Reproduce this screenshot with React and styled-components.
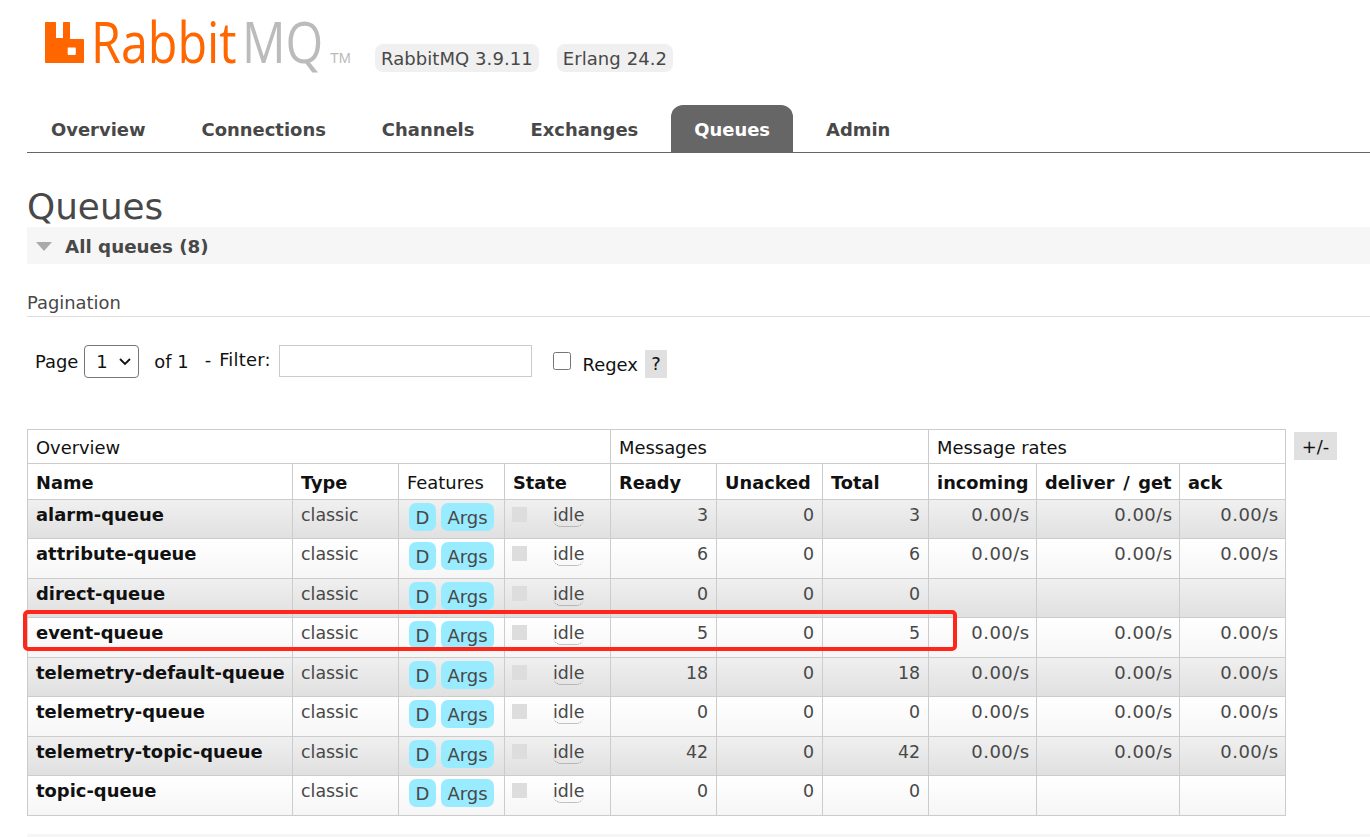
import React from 'react';
import styled, { createGlobalStyle } from 'styled-components';

const Global = createGlobalStyle`
  html, body { margin: 0; padding: 0; background: #fff; overflow: hidden; height: 837px; }
  body { font-family: "DejaVu Sans", Verdana, sans-serif; font-size: 18px; color: #484848; }
  * { box-sizing: border-box; }
`;
const chevron = `url("data:image/svg+xml,%3Csvg xmlns='http://www.w3.org/2000/svg' width='14' height='9' viewBox='0 0 14 9'%3E%3Cpath d='M2 2l5 5 5-5' fill='none' stroke='%23111' stroke-width='1.8'/%3E%3C/svg%3E")`;
const Page = styled.div`position: relative; width: 1370px; height: 837px; padding-left: 27px; overflow: hidden;`;
const Header = styled.header`display: flex; align-items: flex-start; height: 105px;`;
const Logo = styled.svg`display: block; width: 330px; height: 84px; flex: none;`;
const Versions = styled.div`display: flex; gap: 18px; margin-top: 44px; margin-left: 18px;`;
const Version = styled.span`background: #f0f0f0; border-radius: 8px; padding: 0 6px; height: 28px; line-height: 30px; font-size: 18px; letter-spacing: .07px; color: #484848;`;
const Nav = styled.nav`display: flex; gap: 10px; height: 48px; padding-left: 1px; border-bottom: 1px solid #666; margin-right: -1px;`;
const Tab = styled.a`
  display: block; height: 47px; padding: 0 23px; line-height: 50px; font-size: 17.95px; font-weight: 700;
  border-radius: 12px 12px 0 0; color: ${p => p.$active ? '#fff' : '#484848'}; background: ${p => p.$active ? '#666' : 'transparent'};
`;
const Title = styled.h1`margin: 32px 0 0 0; font-size: 35.8px; font-weight: 400; height: 42px; line-height: 44px; color: #484848;`;
const Section = styled.div`display: flex; align-items: center; height: 37px; background: #f6f6f6; gap: 12px; padding-left: 9px;`;
const Tri = styled.span`width: 0; height: 0; border-left: 8.5px solid transparent; border-right: 8.5px solid transparent; border-top: 9px solid #aaa; margin-top: 1px;`;
const SectionTitle = styled.h2`margin: 2px 0 0 1px; font-size: 18.3px; font-weight: 700; color: #484848;`;
const Pagination = styled.h3`margin: 27px 0 0 0; height: 26px; line-height: 24px; font-size: 17.9px; font-weight: 400; border-bottom: 1px solid #ddd; color: #484848;`;
const FilterRow = styled.div`display: flex; align-items: flex-start; height: 112px; padding: 28px 0 0 8px;`;
const Label = styled.span`font-size: 17.9px; color: #111; line-height: 20px; margin-top: ${p => p.$top}px; margin-left: ${p => p.$left || 0}px; white-space: nowrap;`;
const FilterLabel = styled(Label)`word-spacing: 2px; letter-spacing: .2px;`;
const PageSelect = styled.select`
  appearance: none; width: 55px; height: 33px; margin-left: 6px; font: 18px "DejaVu Sans", sans-serif; color: #111;
  border: 1px solid #767676; border-radius: 4px; padding-left: 11px;
  background: #fff ${chevron} no-repeat right 6px center;
`;
const FilterInput = styled.input`width: 253px; height: 32px; margin-left: 8px; border: 1px solid #ccc; background: #fff; outline: none;`;
const Check = styled.input`width: 18px; height: 18px; margin: 7px 0 0 21px;`;
const Help = styled.span`width: 22px; height: 28px; line-height: 28px; background: #e0e0e0; text-align: center; font-size: 17.9px; color: #111; margin: 5px 0 0 7px;`;
const TableWrap = styled.div`display: flex; align-items: flex-start; gap: 8px;`;
const Table = styled.table`border-collapse: collapse; table-layout: fixed; width: 1258px;`;
const HeadRow = styled.tr`height: ${p => p.$h}px;`;
const GroupCell = styled.th`border: 1px solid #ccc; padding: 2px 8px 0; font-size: 17.9px; font-weight: 400; text-align: left; color: #111; line-height: 20px;`;
const ColCell = styled.th`border: 1px solid #ccc; padding: 2px 8px 0; font-size: ${p => p.$plain ? 17.9 : 17.8}px; font-weight: ${p => p.$plain ? 400 : 700}; word-spacing: 2.5px; text-align: left; color: #111; white-space: nowrap; overflow: hidden;`;
const Row = styled.tr`height: 39.44px; background: ${p => p.$alt ? 'linear-gradient(#f0f0f0, #e0e0e0)' : 'linear-gradient(#fff, #f6f6f6)'};`;
const Cell = styled.td`border: 1px solid #ccc; padding: 5px 8px 0; vertical-align: top; font-size: 17.4px; line-height: 20px; color: #484848; text-align: ${p => p.$right ? 'right' : 'left'}; white-space: nowrap; overflow: visible;`;
const RateCell = styled(Cell)`font-size: 18px; letter-spacing: .45px; padding-right: 6.5px;`;
const NameCell = styled(Cell)`font-size: 17.92px; font-weight: 700; color: #111; overflow: hidden;`;
const Pills = styled.div`display: flex; gap: 5px; padding: 0 0 0 2px; margin-top: -2px;`;
const Pill = styled.span`display: block; height: 28px; line-height: 30px; padding: 0 6.5px; background: #99ebff; border-radius: 7px; font-size: 18px; color: #484848;`;
const StateBox = styled.div`display: flex; align-items: flex-start;`;
const Square = styled.span`display: block; width: 15px; height: 15px; background: #ddd; margin: 2px 26px 0 -1px;`;
const Idle = styled.span`border-bottom: 1px dotted #888; border-radius: 0 0 8px 8px; line-height: 20px; font-size: 17.4px; padding-bottom: 1px;`;
const Toggle = styled.span`display: block; width: 43px; height: 28px; line-height: 29px; margin-top: 3px; background: #e0e0e0; text-align: center; font-size: 17.9px; color: #111;`;
const Highlight = styled.div`position: absolute; left: 23px; top: 610px; width: 934px; height: 41px; border: 4px solid #ff2519; border-radius: 5px; pointer-events: none;`;
const FootBar = styled.div`position: absolute; left: 27px; right: 0; top: 834px; height: 3px; background: #f6f6f6;`;

const widths = [265, 106, 106, 106, 106, 106, 106, 108, 143, 106];
const queues = [
  ['alarm-queue', 3, 0, 3, true],
  ['attribute-queue', 6, 0, 6, true],
  ['direct-queue', 0, 0, 0, false],
  ['event-queue', 5, 0, 5, true],
  ['telemetry-default-queue', 18, 0, 18, true],
  ['telemetry-queue', 0, 0, 0, true],
  ['telemetry-topic-queue', 42, 0, 42, true],
  ['topic-queue', 0, 0, 0, false],
];
const tabs = ['Overview', 'Connections', 'Channels', 'Exchanges', 'Queues', 'Admin'];
const cols = [['Name'], ['Type'], ['Features', true], ['State'], ['Ready'], ['Unacked'], ['Total'], ['incoming'], ['deliver / get'], ['ack']];

export default function App() {
  return (
    <Page>
      <Global />
      <Header>
        <Logo viewBox="0 -10 330 84" aria-label="RabbitMQ logo">
          <path fillRule="evenodd" fill="#f60" d="M19 12h9c.6 0 1 .4 1 1v15h7V13c0-.6.4-1 1-1h5c.6 0 1 .4 1 1v16h13c.6 0 1 .4 1 1v22c0 .6-.4 1-1 1H19c-.6 0-1-.4-1-1V13c0-.6.4-1 1-1zM41.500 37.500c-.5 0-.8.300-.8.800v6c0 .5.300.8.800.8h6.500c.5 0 .8-.3.8-.8v-6c0-.5-.3-.8-.8-.8z" />
          <text transform="translate(64 53) scale(.85 1)" fontFamily="'Open Sans', sans-serif" fontSize="57" fill="#f60">Rabbit</text>
          <text transform="translate(215 53) scale(.85 1)" fontFamily="'Open Sans', sans-serif" fontSize="57" fill="#bbb">MQ</text>
          <text x="303" y="53" fontFamily="'Liberation Sans', sans-serif" fontSize="14.5" fill="#bbb">TM</text>
        </Logo>
        <Versions>
          <Version>RabbitMQ 3.9.11</Version>
          <Version>Erlang 24.2</Version>
        </Versions>
      </Header>
      <Nav>
        {tabs.map(t => <Tab key={t} $active={t === 'Queues'}>{t}</Tab>)}
      </Nav>
      <Title>Queues</Title>
      <Section><Tri /><SectionTitle>All queues (8)</SectionTitle></Section>
      <Pagination>Pagination</Pagination>
      <FilterRow>
        <Label $top={7}>Page</Label>
        <PageSelect defaultValue="1"><option>1</option></PageSelect>
        <Label $top={7} $left={15}>of 1</Label>
        <FilterLabel $top={5} $left={16}>- Filter:</FilterLabel>
        <FilterInput type="text" />
        <Check type="checkbox" />
        <Label $top={10} $left={12}>Regex</Label>
        <Help>?</Help>
      </FilterRow>
      <TableWrap>
        <Table>
          <colgroup>{widths.map((w, i) => <col key={i} style={{ width: w }} />)}</colgroup>
          <thead>
            <HeadRow $h={34}>
              <GroupCell colSpan={4}>Overview</GroupCell>
              <GroupCell colSpan={3}>Messages</GroupCell>
              <GroupCell colSpan={3}>Message rates</GroupCell>
            </HeadRow>
            <HeadRow $h={36}>
              {cols.map(([c, plain]) => <ColCell key={c} $plain={plain}>{c}</ColCell>)}
            </HeadRow>
          </thead>
          <tbody>
            {queues.map(([name, ready, unacked, total, rates], i) => (
              <Row key={name} $alt={i % 2 === 0}>
                <NameCell>{name}</NameCell>
                <Cell>classic</Cell>
                <Cell><Pills><Pill>D</Pill><Pill>Args</Pill></Pills></Cell>
                <Cell><StateBox><Square /><Idle>idle</Idle></StateBox></Cell>
                <Cell $right>{ready}</Cell>
                <Cell $right>{unacked}</Cell>
                <Cell $right>{total}</Cell>
                <RateCell $right>{rates ? '0.00/s' : ''}</RateCell>
                <RateCell $right>{rates ? '0.00/s' : ''}</RateCell>
                <RateCell $right>{rates ? '0.00/s' : ''}</RateCell>
              </Row>
            ))}
          </tbody>
        </Table>
        <Toggle>+/-</Toggle>
      </TableWrap>
      <Highlight />
      <FootBar />
    </Page>
  );
}
